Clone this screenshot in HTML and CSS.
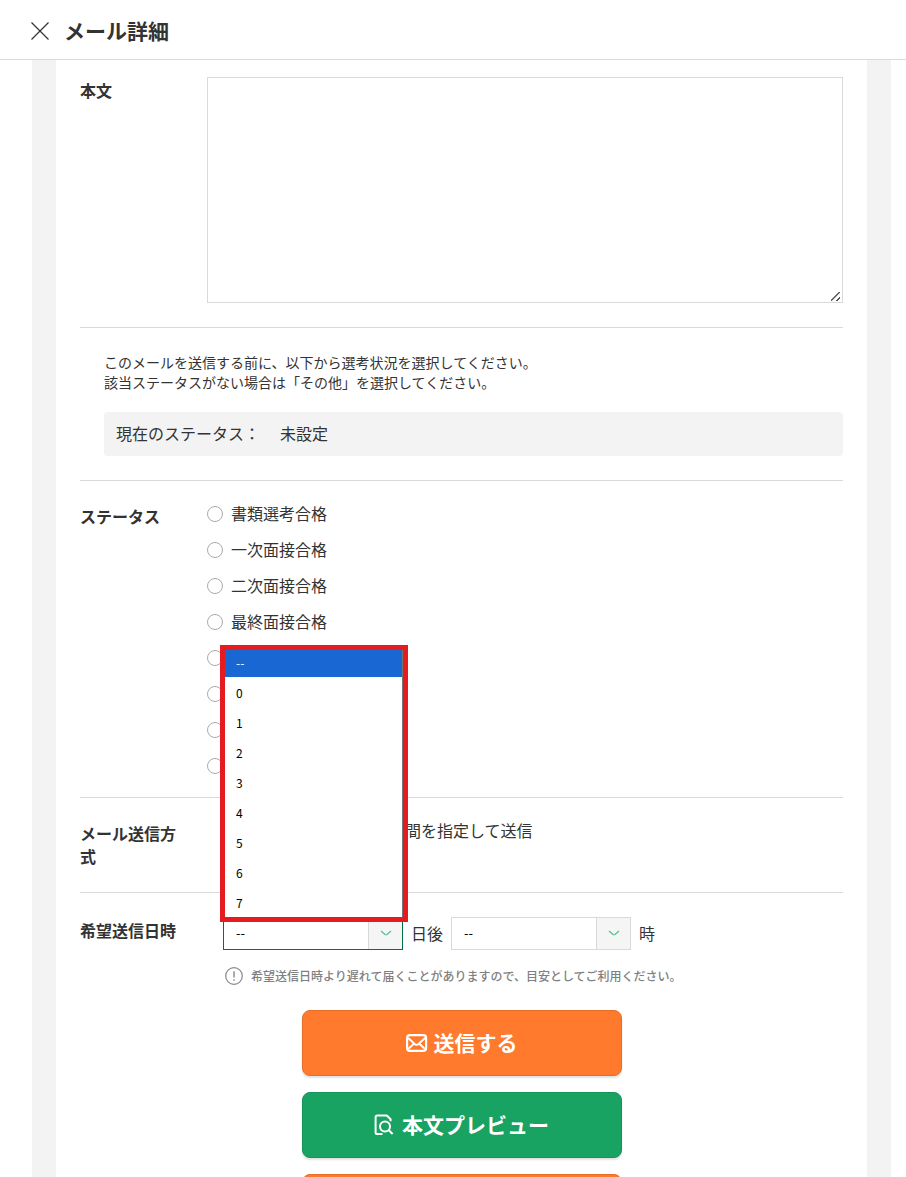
FILE: index.html
```html
<!DOCTYPE html>
<html lang="ja">
<head>
    <meta charset="UTF-8">
    <meta name="viewport" content="width=device-width, initial-scale=1.0">
    <title>メール詳細</title>
    <link rel="stylesheet" href="styles.css">
</head>
<body>

    <header class="header">
        <button type="button" class="close" aria-label="閉じる">
            <svg width="18" height="18" viewBox="0 0 18 18" fill="none" stroke="#333" stroke-width="1.2"><path d="M0.5 0.5l17 17M17.5 0.5l-17 17"/></svg>
        </button>
        <h1>メール詳細</h1>
    </header>

    <main class="container">
        <form class="panel" action="#" method="POST">

            <!-- 本文 -->
            <div class="row row-body">
                <label class="row-label" for="body">本文</label>
                <textarea id="body" name="body"></textarea>
            </div>

            <!-- 現在のステータス -->
            <div class="notice">
                <p>このメールを送信する前に、以下から選考状況を選択してください。<br>該当ステータスがない場合は「その他」を選択してください。</p>
                <div class="current-status">
                    <span>現在のステータス：</span>
                    <span>未設定</span>
                </div>
            </div>

            <!-- ステータス -->
            <div class="row" role="radiogroup" aria-labelledby="status-label">
                <div class="row-label" id="status-label">ステータス</div>
                <div class="choices">
                    <label><input type="radio" name="status" value="1">書類選考合格</label>
                    <label><input type="radio" name="status" value="2">一次面接合格</label>
                    <label><input type="radio" name="status" value="3">二次面接合格</label>
                    <label><input type="radio" name="status" value="4">最終面接合格</label>
                    <label><input type="radio" name="status" value="5">内定</label>
                    <label><input type="radio" name="status" value="6">不合格</label>
                    <label><input type="radio" name="status" value="7">辞退</label>
                    <label><input type="radio" name="status" value="8">その他</label>
                </div>
            </div>

            <!-- メール送信方式 -->
            <div class="row" role="radiogroup" aria-labelledby="method-label">
                <div class="row-label" id="method-label">メール送信方式</div>
                <div class="choices choices-inline">
                    <label><input type="radio" name="method" value="now">今すぐに送信</label>
                    <label><input type="radio" name="method" value="later">時間を指定して送信</label>
                </div>
            </div>

            <!-- 希望送信日時 -->
            <div class="row row-schedule">
                <div class="row-label">希望送信日時</div>
                <div class="schedule">
                    <div class="schedule-fields">
                        <div class="select is-open">
                            <select id="days" name="days">
                                <option>--</option>
                            </select>
                            <svg class="arrow" width="12" height="6" viewBox="0 0 12 6" fill="none" stroke="#4fbf8b" stroke-width="1.2"><path d="M1 1l4 3.4q1 .7 2 0L11 1"/></svg>
                            <ul class="options" role="listbox" aria-label="日後">
                                <li role="option" aria-selected="true">--</li>
                                <li role="option">0</li>
                                <li role="option">1</li>
                                <li role="option">2</li>
                                <li role="option">3</li>
                                <li role="option">4</li>
                                <li role="option">5</li>
                                <li role="option">6</li>
                                <li role="option">7</li>
                            </ul>
                        </div>
                        <label for="days">日後</label>
                        <div class="select">
                            <select id="hours" name="hours">
                                <option>--</option>
                            </select>
                            <svg class="arrow" width="12" height="6" viewBox="0 0 12 6" fill="none" stroke="#4fbf8b" stroke-width="1.2"><path d="M1 1l4 3.4q1 .7 2 0L11 1"/></svg>
                        </div>
                        <label for="hours">時</label>
                    </div>
                    <p class="hint">
                        <svg width="18" height="18" viewBox="0 0 18 18" fill="none" stroke="#888" stroke-width="1.2"><circle cx="9" cy="9" r="8.3"/><path d="M9 4.2v6.3M9 12.2v1.6" stroke-width="1.4"/></svg>
                        希望送信日時より遅れて届くことがありますので、目安としてご利用ください。
                    </p>
                </div>
            </div>

            <div class="buttons">
                <button type="submit" class="btn btn-orange">
                    <svg width="22" height="22" viewBox="0 0 22 22" fill="none" stroke="#fff" stroke-width="2.2" stroke-linejoin="round"><rect x="1.1" y="4.1" width="19" height="15.8" rx="3"/><path d="M2.2 7l6.8 6.2q1.6 1.3 3.2 0L19 7M2.2 18l5.9-5.5M19 18l-5.9-5.5" stroke-width="1.9"/></svg>
                    送信する
                </button>
                <button type="button" class="btn btn-green">
                    <svg width="22" height="22" viewBox="0 0 22 22" fill="none" stroke="#fff" stroke-width="2" stroke-linejoin="round"><path d="M8.5 21H3.2a1.6 1.6 0 0 1-1.6-1.6V4.2a1.6 1.6 0 0 1 1.6-1.6h9.6l3.8 3.6v2"/><circle cx="11" cy="13.4" r="5"/><path d="M14.6 17l4 4"/></svg>
                    本文プレビュー
                </button>
                <button type="button" class="btn btn-orange">下書き保存</button>
            </div>

        </form>
    </main>

</body>
</html>
```
FILE: styles.css
```css
* {
    box-sizing: border-box;
}

body {
    font-family: "Noto Sans CJK JP", sans-serif;
    font-size: 16px;
    line-height: 20px;
    color: #333;
    background-color: #fff;
    margin: 0;
    height: 100vh;
    display: flex;
    flex-direction: column;
    overflow: hidden;
}

p, h1, ul {
    margin: 0;
    padding: 0;
}

button, select, textarea {
    font-family: inherit;
}

/* ヘッダー */
.header {
    flex: none;
    display: flex;
    align-items: center;
    gap: 15px;
    height: 60px;
    padding: 3px 31px 0;
    border-bottom: 1px solid #d9d9d9;
}

.header h1 {
    padding-bottom: 2px;
    font-size: 21px;
    line-height: 32px;
}

.close {
    display: flex;
    padding: 0;
    border: none;
    background: none;
    cursor: pointer;
}

/* 本体 */
.container {
    flex: 1;
    min-height: 0;
    margin: 0 15px 0 32px;
    padding: 0 24px;
    background-color: #f3f3f3;
    overflow-y: auto;
    scrollbar-width: none;
}

.panel {
    padding: 0 24px 24px;
    background-color: #fff;
}

.row {
    display: grid;
    grid-template-columns: 103px 1fr;
    column-gap: 24px;
    align-items: start;
    padding: 22px 0;
    border-bottom: 1px solid #d9d9d9;
}

.row-label {
    padding: 2px 0;
    font-weight: bold;
    line-height: 23px;
}

.row-body {
    padding: 17px 0 24px;
}

.row-body textarea {
    display: block;
    width: 100%;
    height: 226px;
    border: 1px solid #d9d9d9;
    resize: vertical;
}

.row-body textarea::-webkit-resizer {
    background: linear-gradient(135deg, transparent 43%, #555 45%, #555 54%, transparent 56%, transparent 73%, #555 75%, #555 84%, transparent 86%) 4px 5px / 9px 9px no-repeat;
}

.notice {
    padding: 24px 0 24px 24px;
    border-bottom: 1px solid #d9d9d9;
}

.notice p {
    font-size: 14px;
}

.current-status {
    display: flex;
    gap: 20px;
    margin-top: 20px;
    padding: 11px 12px 13px;
    background-color: #f3f3f3;
    border-radius: 4px;
}

/* ラジオボタン */
.choices {
    display: flex;
    flex-direction: column;
    gap: 16px;
}

.choices-inline {
    flex-direction: row;
    gap: 22px;
    padding-left: 16px;
}

.choices label {
    display: flex;
    align-items: center;
    gap: 8px;
}

.choices input {
    appearance: none;
    width: 16px;
    height: 16px;
    margin: 2px 0 0;
    border: 1px solid #aaa;
    border-radius: 50%;
    background-color: #fff;
}

.choices input:checked {
    border: 5px solid #18a363;
}

/* 送信日時 */
.row-schedule {
    padding: 24px 0;
    border-bottom: none;
}

.schedule {
    padding-left: 16px;
}

.schedule-fields {
    display: flex;
    align-items: center;
    gap: 8px;
}

.schedule-fields label {
    padding-bottom: 2px;
}

.select {
    position: relative;
    width: 180px;
}

.select select {
    appearance: none;
    display: block;
    width: 100%;
    height: 33px;
    padding: 0 12px 2px;
    border: 1px solid #d9d9d9;
    border-radius: 0;
    background: linear-gradient(#d9d9d9, #d9d9d9) right 33px top / 1px 100% no-repeat,
        linear-gradient(#f5f5f5, #f5f5f5) right top / 33px 100% no-repeat #fff;
    color: #000;
    font-size: 13px;
}

.select.is-open select {
    border-color: #04703f;
}

.arrow {
    position: absolute;
    top: 13px;
    right: 11px;
    pointer-events: none;
}

.options {
    position: absolute;
    bottom: 28px;
    left: -3px;
    width: 188px;
    border: 5px solid #e51c1f;
    background-color: #fff;
    box-shadow: inset -1px 0 0 #767676;
    color: #000;
    font-size: 12px;
    list-style: none;
    z-index: 1;
}

.options li {
    padding: 2px 11px 0;
    line-height: 28px;
}

.options li[aria-selected="true"] {
    padding: 0 11px 2px;
    margin-right: 1px;
    line-height: 25px;
    background-color: #1967d2;
    color: #fff;
}

.hint {
    display: flex;
    align-items: center;
    gap: 8px;
    margin-top: 16px;
    padding-left: 2px;
    color: #808080;
    font-size: 12px;
    font-weight: 500;
}

/* ボタン */
.buttons {
    display: flex;
    flex-direction: column;
    align-items: center;
    gap: 16px;
}

.btn {
    display: flex;
    align-items: center;
    justify-content: center;
    gap: 6px;
    width: 320px;
    height: 66px;
    padding: 0 0 2px;
    border: 1px solid;
    border-radius: 8px;
    box-shadow: 0 2px 2px rgba(0, 0, 0, 0.12);
    color: #fff;
    font-size: 21px;
    font-weight: bold;
    cursor: pointer;
}

.btn-orange {
    background-color: #ff7a2d;
    border-color: #e66e29;
}

.btn-green {
    background-color: #18a363;
    border-color: #169359;
}
```
